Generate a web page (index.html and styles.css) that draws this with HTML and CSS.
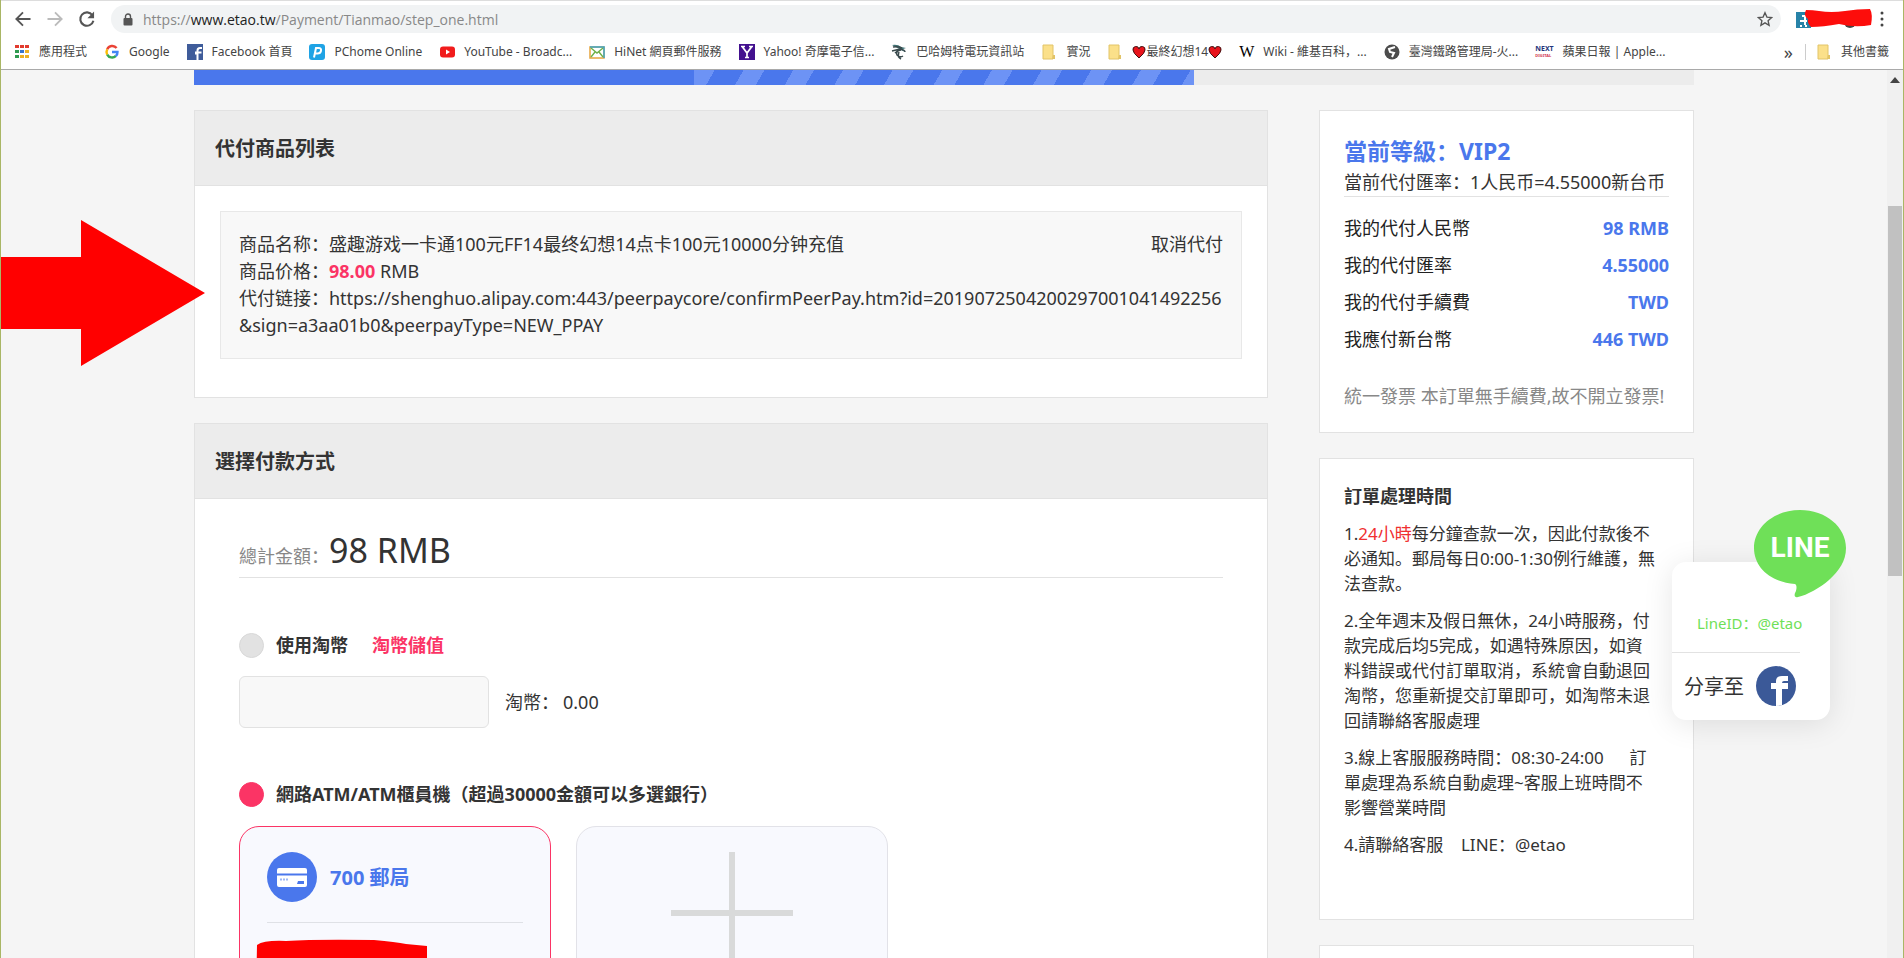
FILE: index.html
```html
<!DOCTYPE html>
<html lang="zh-Hans">
<head>
<meta charset="utf-8">
<title>代付商品列表</title>
<link rel="stylesheet" href="styles.css">
</head>
<body>
<div class="window">
  <header class="chrome">
    <div class="tab-edge"></div>
    <div class="toolbar">
      <button class="tool" aria-label="上一頁"><svg width="20" height="20" viewBox="0 0 24 24"><path d="M21 12H4M12 4l-8 8 8 8" fill="none" stroke="#555" stroke-width="2.2"/></svg></button>
      <button class="tool" aria-label="下一頁"><svg width="20" height="20" viewBox="0 0 24 24"><path d="M3 12h17M12 4l8 8-8 8" fill="none" stroke="#bbb" stroke-width="2.2"/></svg></button>
      <button class="tool" aria-label="重新載入"><svg width="20" height="20" viewBox="0 0 24 24"><path d="M18.500 7.500A8 8 0 1 0 19.700 14" fill="none" stroke="#555" stroke-width="2.500"/><path d="M20.500 3v8h-8z" fill="#555"/></svg></button>
      <div class="omnibox">
        <svg class="lock" width="10" height="13" viewBox="0 0 10 13"><path d="M2.500 5V3.500a2.500 2.500 0 0 1 5 0V5" fill="none" stroke="#555" stroke-width="1.400"/><rect x="0.500" y="5" width="9" height="7.500" rx="1" fill="#555"/></svg>
        <span class="url">https://<b>www.etao.tw</b>/Payment/Tianmao/step_one.html</span>
        <button class="star" aria-label="加入書籤"><svg width="16" height="16" viewBox="0 0 24 24"><path d="M12 2.500l2.900 6.600 7.100.7-5.400 4.700 1.600 7L12 17.800 5.800 21.500l1.600-7L2 9.800l7.100-.7z" fill="none" stroke="#555" stroke-width="2"/></svg></button>
      </div>
      <svg class="extensions" width="78" height="22" viewBox="0 0 78 22"><rect x="1" y="4" width="15" height="16" fill="#2783a8"/><path d="M7 8h3v9M5 13h7M6 17v2m5-2v2" stroke="#fff" stroke-width="2" fill="none"/><circle cx="55" cy="14" r="6" fill="#444"/><path d="M11 2Q18 2 24 3Q36 5 50 3Q62 1 75 1Q78 6 76 17Q60 20 44 16Q28 19 16 19Q12 15 13 11Q8 8 11 2z" fill="#fd0d0b"/></svg>
      <button class="menu" aria-label="選單"><svg width="6" height="16" viewBox="0 0 6 16"><g fill="#444"><circle cx="3" cy="2" r="1.500"/><circle cx="3" cy="8" r="1.500"/><circle cx="3" cy="14" r="1.500"/></g></svg></button>
    </div>
    <nav class="bookmarks">
      <a class="mark apps" href="#"><svg width="16" height="16" viewBox="0 0 16 16"><path d="M1 1h4v3H1zM6 1h4v3H6zM11 1h4v3h-4z" fill="#e23b2e"/><path d="M1 6h4v3H1zM1 11h4v3H1z" fill="#2f9a50"/><path d="M6 6h4v3H6z" fill="#3874cb"/><path d="M11 6h4v3h-4zM6 11h4v3H6zM11 11h4v3h-4z" fill="#eeb021"/></svg>應用程式</a>
      <a class="mark google" href="#"><svg width="16" height="16" viewBox="0 0 16 16"><g fill="none" stroke-width="2.400"><path d="M12.600 4A5.500 5.500 0 0 0 3.200 5.400" stroke="#ea4335"/><path d="M3.200 5.400a5.500 5.500 0 0 0 0 5.200" stroke="#fbbc05"/><path d="M3.200 10.600a5.500 5.500 0 0 0 8.600 1.400" stroke="#34a853"/><path d="M11.800 12.200A5.500 5.500 0 0 0 13.500 8H8" stroke="#4285f4"/></g></svg>Google</a>
      <a class="mark facebook" href="#"><svg width="16" height="16" viewBox="0 0 16 16"><path d="M0 0h16v16H0z" fill="#3f5c9a"/><path d="M10.500 16V9.500H8M10.500 10V6.500Q10.500 4 13 4h2M8 8.500h6.500" stroke="#fff" stroke-width="2" fill="none"/></svg>Facebook 首頁</a>
      <a class="mark pchome" href="#"><svg width="16" height="16" viewBox="0 0 16 16"><rect width="16" height="16" rx="3" fill="#1fa3e5"/><path d="M5 13.500L7 4h2.500q3 0 2.500 2.800Q11.500 9.500 8.500 9.500H6.200" stroke="#fff" stroke-width="2" fill="none"/></svg>PChome Online</a>
      <a class="mark youtube" href="#"><svg width="16" height="16" viewBox="0 0 16 16"><rect x="1" y="2.500" width="15" height="11" rx="3" fill="#f11c1c"/><path d="M7 5.500v5l4-2.500z" fill="#fff"/></svg>YouTube - Broadc...</a>
      <a class="mark hinet" href="#"><svg width="16" height="16" viewBox="0 0 16 16"><rect x="1" y="3" width="14" height="11" fill="#fff" stroke="#e6a43c" stroke-width="1.500"/><path d="M1 3h14v11" fill="none" stroke="#39a5ca" stroke-width="1.500"/><path d="M2 4l6 5 6-5M2 13l4-5m8 5l-4-5" fill="none" stroke="#6fb04a" stroke-width="1.400"/></svg>HiNet 網頁郵件服務</a>
      <a class="mark yahoo" href="#"><svg width="16" height="16" viewBox="0 0 16 16"><path d="M0 0h16v16H0z" fill="#43118f"/><path d="M3.500 3L8 9l4.500-6M8 9v5M2 2.500h4m4 0h4M6 13.500h4" stroke="#fff" stroke-width="1.700" fill="none"/></svg>Yahoo! 奇摩電子信...</a>
      <a class="mark baha" href="#"><svg width="16" height="16" viewBox="0 0 16 16"><path d="M1 1q6-1 9 2l5 1-3 1 2 3-4-2" fill="#3f7274"/><path d="M2 3q5-1 9 1M1 7l8-2q5 1 5 3M10 5q-6 3-4 6 3 3 6 1M4 9q3-3 6-3M8 8q-2 5 2 7" fill="none" stroke="#3a4a4d" stroke-width="1.500"/></svg>巴哈姆特電玩資訊站</a>
      <a class="mark live" href="#"><svg width="16" height="16" viewBox="0 0 16 16"><path d="M2 1h10v14H2z" fill="#fbe08a" stroke="#e2c468"/><path d="M12 11h2v4h-3z" fill="#e2c468"/></svg>實況</a>
      <a class="mark ff" href="#"><svg width="16" height="16" viewBox="0 0 16 16"><path d="M2 1h10v14H2z" fill="#fbe08a" stroke="#e2c468"/><path d="M12 11h2v4h-3z" fill="#e2c468"/></svg><span class="hearts"><svg width="14" height="13" viewBox="0 0 14 13"><path d="M7 12Q1 7 1 4a3 3 0 0 1 6-1 3 3 0 0 1 6 1q0 3-6 8z" fill="#e8141c" stroke="#401010"/></svg>最終幻想14<svg width="14" height="13" viewBox="0 0 14 13"><path d="M7 12Q1 7 1 4a3 3 0 0 1 6-1 3 3 0 0 1 6 1q0 3-6 8z" fill="#e8141c" stroke="#401010"/></svg></span></a>
      <a class="mark wiki" href="#"><span class="wiki-w">W</span>Wiki - 維基百科，...</a>
      <a class="mark rail" href="#"><svg width="16" height="16" viewBox="0 0 16 16"><circle cx="8" cy="8" r="7.500" fill="#4c4c4c"/><path d="M11 3L5 5l1 3 4 1-2 4" stroke="#fff" stroke-width="2" fill="none"/></svg>臺灣鐵路管理局-火...</a>
      <a class="mark apple" href="#"><span class="next"><span>NEXT</span><span class="digital">DIGITAL</span></span>蘋果日報 | Apple...</a>
      <a class="mark more" href="#">»</a>
      <a class="mark others" href="#"><svg width="16" height="16" viewBox="0 0 16 16"><path d="M2 1h10v14H2z" fill="#fbe08a" stroke="#e2c468"/><path d="M12 11h2v4h-3z" fill="#e2c468"/></svg>其他書籤</a>
    </nav>
  </header>

  <div class="viewport">
    <div class="page">
      <div class="progress"><div class="done"></div><div class="current"></div></div>
      <div class="columns">
        <main class="main">
          <section class="panel">
            <h2 class="panel-title">代付商品列表</h2>
            <div class="panel-body goods">
              <div class="item">
                <div class="item-top"><span>商品名称：盛趣游戏一卡通100元FF14最终幻想14点卡100元10000分钟充值</span><a href="#">取消代付</a></div>
                <div>商品价格：<strong class="price">98.00</strong> RMB</div>
                <div class="item-link">代付链接：https://shenghuo.alipay.com:443/peerpaycore/confirmPeerPay.htm?id=2019072504200297001041492256<br>&amp;sign=a3aa01b0&amp;peerpayType=NEW_PPAY</div>
              </div>
            </div>
          </section>
          <section class="panel">
            <h2 class="panel-title">選擇付款方式</h2>
            <div class="panel-body pay">
              <div class="total"><span class="total-label">總計金額：</span><span class="total-sum">98 RMB</span></div>
              <div class="method coin">
                <input class="radio" type="radio" name="method" id="coin">
                <label for="coin">使用淘幣</label>
                <a class="topup" href="#">淘幣儲值</a>
              </div>
              <div class="coin-row">
                <input class="coin-input" type="text" id="coin-amount">
                <label for="coin-amount">淘幣：</label><span class="coin-left">0.00</span>
              </div>
              <div class="method atm">
                <input class="radio" type="radio" name="method" id="atm" checked>
                <label for="atm">網路ATM/ATM櫃員機（超過30000金額可以多選銀行）</label>
              </div>
              <div class="banks">
                <div class="bank selected">
                  <div class="bank-head">
                    <svg width="50" height="50" viewBox="0 0 50 50"><circle cx="25" cy="25" r="25" fill="#4a77ec"/><path d="M12 16h26q2 0 2 2v3.500H10V18q0-2 2-2zM10 23.500h30V33q0 2-2 2H12q-2 0-2-2z" fill="#fff"/><path d="M31 29h6v3h-7z" fill="#4a77ec"/><path d="M13 27.500h2m1 0h2m1 0h2" stroke="#9db7f6" stroke-width="2"/></svg>
                    <span>700 郵局</span>
                  </div>
                  <svg class="scribble" width="172" height="60" viewBox="0 0 172 60"><path d="M1 6Q8 1 30 2Q60 0 118 1Q140 3 150 5L171 7V60H0z" fill="#f00"/></svg>
                </div>
                <button class="bank add" aria-label="新增銀行"><svg width="122" height="122" viewBox="0 0 122 122"><path d="M61 0v122M0 61h122" stroke="#d9dada" stroke-width="6"/></svg></button>
              </div>
            </div>
          </section>
        </main>
        <aside class="side">
          <section class="card level">
            <h3 class="level-title">當前等級：VIP2</h3>
            <p class="rate">當前代付匯率：1人民币=4.55000新台币</p>
            <dl class="sums">
              <div><dt>我的代付人民幣</dt><dd>98 RMB</dd></div>
              <div><dt>我的代付匯率</dt><dd>4.55000</dd></div>
              <div><dt>我的代付手續費</dt><dd>TWD</dd></div>
              <div><dt>我應付新台幣</dt><dd>446 TWD</dd></div>
            </dl>
            <p class="invoice">統一發票 本訂單無手續費,故不開立發票!</p>
          </section>
          <section class="card notes">
            <h3 class="notes-title">訂單處理時間</h3>
            <p>1.<span class="red">24小時</span>每分鐘查款一次，因此付款後不<br>必通知。郵局每日0:00-1:30例行維護，無<br>法查款。</p>
            <p>2.全年週末及假日無休，24小時服務，付<br>款完成后均5完成，如遇特殊原因，如資<br>料錯誤或代付訂單取消，系統會自動退回<br>淘幣，您重新提交訂單即可，如淘幣未退<br>回請聯絡客服處理</p>
            <p>3.線上客服服務時間：08:30-24:00 &emsp; 訂<br>單處理為系統自動處理~客服上班時間不<br>影響營業時間</p>
            <p>4.請聯絡客服 &nbsp; &nbsp;LINE：@etao</p>
          </section>
          <section class="card next-card"></section>
        </aside>
      </div>
    </div>
    <div class="scrollbar"><svg width="10" height="6" viewBox="0 0 10 6"><path d="M5 0l5 6H0z" fill="#444"/></svg><div class="thumb"></div></div>
    <svg class="arrow" width="204" height="146" viewBox="0 0 204 146"><path d="M0 37h80V0l124 73-124 73v-37H0z" fill="#f00"/></svg>
    <div class="float">
      <div class="line-logo"><svg width="92" height="88" viewBox="0 0 92 88"><path d="M46 0C72 0 92 17 92 38c0 13-7 23-17 32-9 8-22 15-31 17-3 1-4-1-3-4 2-4 2-8 0-9C16 72 0 57 0 38 0 17 20 0 46 0z" fill="#6fe058"/></svg><span>LINE</span></div>
      <p class="line-id">LineID：@etao</p>
      <div class="share"><span>分享至</span><a href="#" aria-label="Facebook"><svg width="40" height="40" viewBox="0 0 40 40"><circle cx="20" cy="20" r="20" fill="#3b5998"/><path d="M20 40V23h-5v-6h5v-2q0-5 6-5h6v5h-4q-2 0-2 2h6v6h-6v16.500z" fill="#fff"/></svg></a></div>
    </div>
  </div>
</div>
</body>
</html>
```
FILE: styles.css
```css
* { box-sizing: border-box; }
body, h2, h3, p, dl, dd { margin: 0; }
body { font-family: "Noto Sans", "Noto Sans CJK SC", sans-serif; font-size: 18px; line-height: 27px; color: #333; }
a { color: inherit; text-decoration: none; }
button { border: 0; background: none; padding: 0; }
svg { display: block; flex: none; }

.window { height: 100vh; display: flex; flex-direction: column; overflow: hidden; border: solid #a9b665; border-width: 0 1px; }
.chrome { flex: none; background: #fff; border-bottom: 1px solid #a9a9a9; }
.tab-edge { height: 1px; width: 100%; background: #ddd; }
.toolbar { display: flex; align-items: center; height: 36px; padding-left: 12px; }
.tool { width: 20px; margin-right: 12px; }
.omnibox { flex: 1; display: flex; align-items: center; height: 28px; margin-left: 2px; padding: 0 8px 0 12px; border-radius: 14px; background: #f1f3f4; color: #888; }
.lock { margin-right: 10px; }
.url { flex: 1; font-family: "Open Sans", sans-serif; font-size: 14px; }
.url b { font-weight: 400; color: #222; }
.extensions { margin-left: 14px; }
.menu { width: 6px; margin: 0 18px 0 6px; }
.bookmarks { display: flex; align-items: center; height: 32px; padding: 0 14px 2px 13px; font-family: "Noto Sans", "Noto Sans CJK TC", sans-serif; font-size: 12px; line-height: 16px; color: #444; }
.mark { display: flex; align-items: center; gap: 9px; margin-right: 17px; white-space: nowrap; }
.hearts { display: flex; align-items: center; }
.wiki-w { font-family: "Liberation Serif", serif; font-size: 16px; color: #000; }
.next { display: flex; flex-direction: column; font-size: 7px; line-height: 7px; font-weight: 700; color: #24357c; }
.digital { font-size: 4px; color: #d0364f; }
.more { margin-left: auto; margin-right: 12px; font-size: 18px; }
.others { margin-right: 0; padding-left: 10px; border-left: 1px solid #ccc; }

.viewport { flex: 1; min-height: 0; position: relative; display: flex; overflow: hidden; background: #f5f5f5; }
.page { flex: 1; display: flex; flex-direction: column; align-items: center; min-width: 0; }
.progress, .columns { width: 100%; max-width: 1500px; }
.progress { flex: none; display: flex; height: 15px; background: #ececec; }
.done { width: 33.333%; background: #4a77ec; }
.current { width: 33.333%; background: repeating-linear-gradient(120deg, #6d93f5 0 18px, #4a77ec 18px 43px); }
.columns { display: grid; grid-template-columns: minmax(0, 1074fr) minmax(0, 375fr); gap: 51px; margin-top: 25px; align-items: start; }
.main, .side { display: flex; flex-direction: column; gap: 25px; }

.panel { background: #fff; border: 1px solid #e2e2e2; }
.panel-title { padding: 24px 20px 23px; background: #ececec; border-bottom: 1px solid #e2e2e2; font-size: 20px; line-height: 27px; }
.goods { padding: 25px 25px 38px; }
.item { padding: 19px 18px; background: #f8f8f8; border: 1px solid #e8e8e8; }
.item-top { display: flex; justify-content: space-between; }
.item-link { white-space: nowrap; }
.price { color: #fb3465; }
.pay { padding: 31px 44px 0; }
.total { display: flex; align-items: baseline; padding-bottom: 7px; border-bottom: 1px solid #e2e2e2; }
.total-label { color: #888; }
.total-sum { font-size: 34px; line-height: 40px; }
.method { display: flex; align-items: center; font-weight: 700; }
.radio { appearance: none; width: 25px; height: 25px; margin: 0 12px 0 0; border: 1px solid #d8d8d8; border-radius: 50%; background: #e2e2e2; }
.radio:checked { background: #fb3465; border-color: #fb3465; }
.coin { margin-top: 54px; }
.topup { margin-left: 24px; color: #fb3465; }
.coin-row { display: flex; align-items: center; margin-top: 17px; }
.coin-input { width: 250px; height: 52px; margin-right: 16px; border: 1px solid #e2e2e2; border-radius: 6px; background: #f8f8f8; font: inherit; }
.coin-left { margin-left: 4px; }
.atm { margin-top: 53px; }
.banks { display: flex; gap: 25px; margin-top: 18px; }
.bank { width: 312px; height: 190px; padding: 25px 27px; border: 1px solid #e2e2e8; border-radius: 20px; background: #f8f9fe; }
.selected { border-color: #fb3465; }
.bank-head { display: flex; align-items: center; gap: 13px; padding-bottom: 20px; border-bottom: 1px solid #dfe1e6; font-size: 20px; font-weight: 700; color: #4a77ec; }
.scribble { margin: 16px 0 0 -11px; }
.add { display: flex; justify-content: center; }

.card { padding: 24px 24px 22px; background: #fff; border: 1px solid #e2e2e2; }
.level-title { font-size: 23px; line-height: 32px; color: #4a77ec; }
.rate { padding-top: 2px; border-bottom: 1px solid #e2e2e2; white-space: nowrap; }
.sums { margin-top: 13px; color: #222; }
.sums div { display: flex; justify-content: space-between; line-height: 37px; }
.sums dd { font-weight: 700; color: #4a77ec; }
.invoice { margin-top: 25px; color: #888; white-space: nowrap; }
.notes { padding-bottom: 62px; font-size: 17px; line-height: 25px; white-space: nowrap; }
.notes-title { font-size: 18px; line-height: 26px; }
.notes p { margin-top: 12px; }
.red { color: #f03030; }
.next-card { height: 60px; }

.scrollbar { flex: none; display: flex; flex-direction: column; align-items: center; width: 16px; padding: 7px 1px 0; background: #f0f0f0; }
.thumb { width: 100%; height: 370px; margin-top: 123px; background: #c1c1c1; }
.arrow { position: absolute; left: 0; top: 150px; }

.float { position: absolute; right: 73px; top: 492px; width: 158px; padding-top: 48px; border-radius: 14px; background: #fff; box-shadow: 0 4px 30px rgba(0, 0, 0, 0.1); }
.line-logo { position: absolute; right: -16px; top: -52px; width: 92px; }
.line-logo span { position: absolute; left: 0; top: 21px; width: 100%; text-align: center; font-family: Roboto, sans-serif; font-size: 28px; line-height: 34px; font-weight: 700; color: #fff; }
.line-id { width: 128px; padding: 0 0 15px 25px; border-bottom: 1px solid #e2e2e2; color: #6fe058; font-size: 15px; white-space: nowrap; }
.share { display: flex; align-items: center; gap: 12px; padding: 13px 12px 14px; font-size: 20px; }
```
